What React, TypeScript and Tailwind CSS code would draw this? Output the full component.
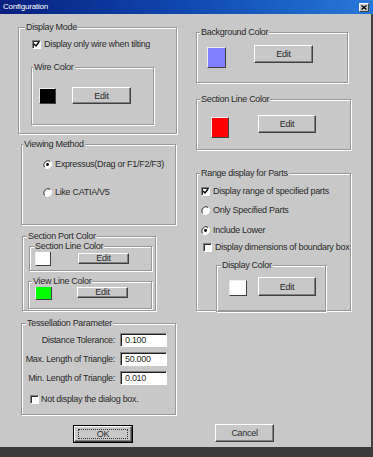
import React from "react";

const BG = "bg-[#c8c8c8]";

function Group({
  label,
  className,
  labelPos,
  children,
}: {
  label: string;
  className: string;
  labelPos: string;
  children?: React.ReactNode;
}) {
  return (
    <div
      className={`relative shrink-0 border border-[#999999] shadow-[1px_1px_0_#fff,inset_1px_1px_0_#fff] ${className}`}
    >
      <span
        className={`absolute -top-[6px] ${labelPos} px-[1px] ${BG} leading-[11px] whitespace-nowrap`}
      >
        {label}
      </span>
      {children}
    </div>
  );
}

function Btn({ className, children }: { className: string; children: React.ReactNode }) {
  return (
    <div
      className={`shrink-0 flex items-center justify-center border border-t-white border-l-white border-r-[#404040] border-b-[#404040] shadow-[inset_-1px_-1px_0_#808080] ${BG} ${className}`}
    >
      {children}
    </div>
  );
}

function Swatch({ className, color }: { className: string; color: string }) {
  return (
    <div
      className={`shrink-0 border border-t-[#eeeeee] border-l-[#eeeeee] border-r-[#404040] border-b-[#404040] ${className}`}
    >
      <div className={`w-full h-full ${color}`} />
    </div>
  );
}

function Check({ checked }: { checked?: boolean }) {
  return (
    <div className="shrink-0 w-[9px] h-[9px] bg-white border border-t-[#808080] border-l-[#808080] border-r-white border-b-white shadow-[inset_1px_1px_0_#303030]">
      {checked && (
        <svg width="7" height="7" viewBox="0 0 7 7" className="block">
          <path d="M1 3 L3 5 L6 1" stroke="#000" strokeWidth="1.4" fill="none" />
        </svg>
      )}
    </div>
  );
}

function Radio({ on }: { on?: boolean }) {
  return (
    <svg width="9" height="9" viewBox="0 0 9 9" className="shrink-0 block">
      <circle cx="4.5" cy="4.5" r="4" fill="#fff" />
      <path d="M7.3 1.7 A4 4 0 0 0 1.7 7.3" stroke="#555" strokeWidth="1.2" fill="none" />
      <path d="M1.7 7.3 A4 4 0 0 0 7.3 1.7" stroke="#fff" strokeWidth="1.2" fill="none" />
      {on && <circle cx="4.5" cy="4.5" r="1.4" fill="#000" />}
    </svg>
  );
}

function Field({ label, value, className }: { label: string; value: string; className: string }) {
  return (
    <div className={`flex items-center ${className}`}>
      <span className="w-[94px] text-right pr-[1px]">{label}</span>
      <div className="ml-[4px] w-[47px] h-[14px] flex items-center pl-[4px] bg-white border border-t-[#808080] border-l-[#808080] border-r-white border-b-white shadow-[inset_1px_1px_0_#202020]">
        {value}
      </div>
    </div>
  );
}

export default function App() {
  return (
    <div
      className={`w-[373px] h-[457px] flex flex-col overflow-hidden ${BG} text-[#2b2b2b] text-[9px] leading-[10px] tracking-[-0.3px] font-['Liberation_Sans',Arial,sans-serif]`}
    >
      {/* title bar */}
      <div className="h-[14px] shrink-0 flex items-center justify-between bg-linear-to-r from-[#08207e] via-[#1048b0] to-[#2878d8] pl-[3px] pr-[4px]">
        <span className="text-white text-[8px] tracking-[-0.2px]">Configuration</span>
        <div className="w-[10px] h-[9px] flex items-center justify-center bg-[#c8c8c8] border border-t-white border-l-white border-r-[#404040] border-b-[#404040]">
          <svg width="6" height="5" viewBox="0 0 6 5">
            <path d="M0.5 0.5 L5.5 4.5 M5.5 0.5 L0.5 4.5" stroke="#000" strokeWidth="1.3" />
          </svg>
        </div>
      </div>

      <div className="flex-1 flex flex-col border-r-2 border-[#404040]">
        <div className="flex">
          {/* left column */}
          <div className="flex flex-col pl-[18px] w-[177px]">
            <Group label="Display Mode" labelPos="left-[6px]" className="mt-[13px] w-[159px] h-[107px]">
              <div className="flex items-center gap-[3px] ml-[13px] mt-[11px]">
                <Check checked />
                <span>Display only wire when tilting</span>
              </div>
              <Group label="Wire Color" labelPos="left-[1px]" className="ml-[12px] mt-[18px] w-[123px] h-[58px]">
                <div className="flex items-start ml-[7px] mt-[19px]">
                  <Swatch className="w-[17px] h-[16px] mt-[1px]" color="bg-black" />
                  <Btn className="ml-[16px] w-[59px] h-[17px]">Edit</Btn>
                </div>
              </Group>
            </Group>

            <Group label="Viewing Method" labelPos="left-[1px]" className="ml-[3px] mt-[10px] w-[155px] h-[81px]">
              <div className="flex items-center gap-[3px] ml-[21px] mt-[14px]">
                <Radio on />
                <span>Expressus(Drag or F1/F2/F3)</span>
              </div>
              <div className="flex items-center gap-[3px] ml-[21px] mt-[18px]">
                <Radio />
                <span>Like CATIA/V5</span>
              </div>
            </Group>

            <Group label="Section Port Color" labelPos="left-[4px]" className="ml-[4px] mt-[11px] w-[134px] h-[75px]">
              <Group label="Section Line Color" labelPos="left-[4px]" className="ml-[6px] mt-[9px] w-[123px] h-[25px]">
                <div className="flex items-center ml-[5px] mt-[3px]">
                  <Swatch className="w-[16px] h-[16px]" color="bg-white" />
                  <Btn className="ml-[27px] w-[51px] h-[11px]">Edit</Btn>
                </div>
              </Group>
              <Group label="View Line Color" labelPos="left-[3px]" className="ml-[5px] mt-[10px] w-[124px] h-[28px]">
                <div className="flex items-center ml-[6px] mt-[2px]">
                  <Swatch className="w-[17px] h-[16px]" color="bg-[#00ff00]" />
                  <Btn className="ml-[25px] w-[51px] h-[11px]">Edit</Btn>
                </div>
              </Group>
            </Group>

            <Group label="Tessellation Parameter" labelPos="left-[4px]" className="ml-[3px] mt-[12px] w-[155px] h-[92px]">
              <Field label="Distance Tolerance:" value="0.100" className="mt-[9px]" />
              <Field label="Max. Length of Triangle:" value="50.000" className="mt-[5px]" />
              <Field label="Min. Length of Triangle:" value="0.010" className="mt-[5px]" />
              <div className="flex items-center gap-[2px] ml-[8px] mt-[9px]">
                <Check />
                <span>Not display the dialog box.</span>
              </div>
            </Group>
          </div>

          {/* right column */}
          <div className="flex flex-col ml-[19px] w-[155px]">
            <Group label="Background Color" labelPos="left-[3px]" className="mt-[18px] w-[152px] h-[51px]">
              <div className="flex items-start ml-[10px]">
                <Swatch className="mt-[14px] w-[19px] h-[21px]" color="bg-[#8080ff]" />
                <Btn className="mt-[12px] ml-[28px] w-[59px] h-[18px]">Edit</Btn>
              </div>
            </Group>

            <Group label="Section Line Color" labelPos="left-[3px]" className="mt-[16px] w-[155px] h-[51px]">
              <div className="flex items-start ml-[14px]">
                <Swatch className="mt-[17px] w-[18px] h-[21px]" color="bg-[#ff0000]" />
                <Btn className="mt-[15px] ml-[29px] w-[58px] h-[18px]">Edit</Btn>
              </div>
            </Group>

            <Group label="Range display for Parts" labelPos="left-[3px]" className="mt-[23px] w-[155px] h-[138px]">
              <div className="flex items-center gap-[3px] ml-[4px] mt-[12px]">
                <Check checked />
                <span>Display range of specified parts</span>
              </div>
              <div className="flex items-center gap-[3px] ml-[4px] mt-[9px]">
                <Radio />
                <span>Only Specified Parts</span>
              </div>
              <div className="flex items-center gap-[3px] ml-[4px] mt-[10px]">
                <Radio on />
                <span>Include Lower</span>
              </div>
              <div className="flex items-center gap-[3px] ml-[6px] mt-[7px]">
                <Check />
                <span>Display dimensions of boundary box</span>
              </div>
              <Group label="Display Color" labelPos="left-[4px]" className="ml-[19px] mt-[13px] w-[110px] h-[47px]">
                <div className="flex items-start ml-[12px]">
                  <Swatch className="mt-[14px] w-[18px] h-[16px]" color="bg-white" />
                  <Btn className="mt-[11px] ml-[11px] w-[58px] h-[19px]">Edit</Btn>
                </div>
              </Group>
            </Group>
          </div>
        </div>

        {/* buttons */}
        <div className="flex items-start pl-[73px] mt-[10px]">
          <div className="w-[60px] h-[18px] border border-black">
            <div className="w-full h-full flex items-center justify-center border border-t-white border-l-white border-r-[#404040] border-b-[#404040] shadow-[inset_-1px_-1px_0_#808080]">
              <div className="w-[50px] h-[10px] flex items-center justify-center border border-dotted border-[#333333]">
                OK
              </div>
            </div>
          </div>
          <Btn className="ml-[82px] -mt-[1px] w-[59px] h-[18px]">Cancel</Btn>
        </div>
      </div>

      <div className="h-[10px] shrink-0 bg-[#3a3a3a]" />
    </div>
  );
}
